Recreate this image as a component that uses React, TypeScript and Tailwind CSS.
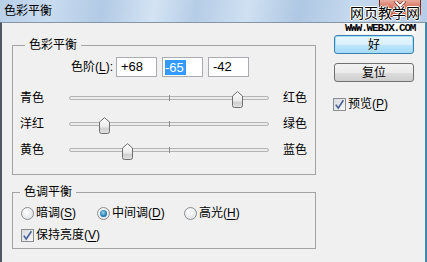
import React from 'react'

const sliders = [
  { left: '青色', right: '红色', value: 68 },
  { left: '洋红', right: '绿色', value: -65 },
  { left: '黄色', right: '蓝色', value: -42 },
]

function Thumb() {
  return (
    <svg width="11" height="17" viewBox="0 0 11 17">
      <defs>
        <linearGradient id="thumbFill" x1="0" y1="0" x2="0" y2="1">
          <stop offset="0" stopColor="#fdfdfd" />
          <stop offset="0.55" stopColor="#ececec" />
          <stop offset="0.7" stopColor="#cfcfcf" />
          <stop offset="1" stopColor="#e4e4e4" />
        </linearGradient>
      </defs>
      <path
        d="M0.5 5 L5.5 0.7 L10.5 5 V14.5 Q10.5 16.5 8.5 16.5 H2.5 Q0.5 16.5 0.5 14.5 Z"
        fill="url(#thumbFill)"
        stroke="#6f6f6f"
      />
    </svg>
  )
}

function Slider({ left, right, value }: { left: string; right: string; value: number }) {
  const center = value + 100
  return (
    <div className="flex h-[26px] items-center">
      <span className="w-[56px] pl-[7px]">{left}</span>
      <div className="relative h-[26px] w-[200px]">
        <div className="absolute left-0 right-0 top-[11px] h-[4px] rounded-full border border-[#b4b4b4] bg-[#ececec]" />
        <div className="absolute left-[100px] top-[10px] h-[6px] w-px bg-[#8c8c8c]" />
        <div className="absolute top-[6px]" style={{ left: center - 5.5 }}>
          <Thumb />
        </div>
      </div>
      <span className="ml-[14px]">{right}</span>
    </div>
  )
}

function Radio({ checked }: { checked?: boolean }) {
  return (
    <span className="flex h-[13px] w-[13px] items-center justify-center rounded-full border border-[#8b8d8f] bg-[radial-gradient(circle_at_40%_35%,#ffffff,#d9dbdd)]">
      {checked && (
        <span className="h-[7px] w-[7px] rounded-full bg-[radial-gradient(circle_at_45%_40%,#9fd4f0,#2a82b8_55%,#0f4d7c)]" />
      )}
    </span>
  )
}

function Check() {
  return (
    <span className="flex h-[13px] w-[13px] items-center justify-center border border-[#8b8d8f] bg-[linear-gradient(135deg,#d8dbe0,#f6f7f9)]">
      <svg width="11" height="11" viewBox="0 0 11 11">
        <path d="M1.8 5.6 L4.2 9 L9.4 1.2" fill="none" stroke="#4a6296" strokeWidth="1.6" />
      </svg>
    </span>
  )
}

function U({ c }: { c: string }) {
  return <span className="underline underline-offset-[2px]">{c}</span>
}

export default function App() {
  return (
    <div className="relative flex h-[262px] w-[427px] flex-col overflow-hidden bg-[#f0f0f0] text-[12px] leading-[16px] text-black font-['Liberation_Sans','Noto_Sans_CJK_SC',sans-serif]">
      {/* title bar */}
      <div className="flex h-[22px] items-center bg-[linear-gradient(100deg,#b9d0e9_0%,#c8dbef_12%,#b2cae5_24%,#d3e3f3_36%,#b6cde7_46%,#cfe0f1_58%,#aec7e3_70%,#c5d9ee_82%,#b4cce7_100%)] pl-[4px]">
        <span className="text-[12px]">色彩平衡</span>
      </div>

      {/* close button */}
      <div className="absolute right-[6px] top-0 flex h-[17px] w-[42px] justify-center rounded-b-[4px] border border-t-0 border-[#7a2c22] bg-[linear-gradient(180deg,#e9ab9d_0%,#d9735e_45%,#c0412b_55%,#d7765f_100%)] pt-[1px]">
        <svg width="12" height="10" viewBox="0 0 12 10">
          <path d="M2 1 L10 9 M10 1 L2 9" stroke="#6a2a20" strokeWidth="3.2" strokeLinecap="round" />
          <path d="M2 1 L10 9 M10 1 L2 9" stroke="#ffffff" strokeWidth="1.8" strokeLinecap="round" />
        </svg>
      </div>

      {/* watermark */}
      <div className="absolute left-[350px] top-[5px] text-[14px] leading-[16px] text-black [text-shadow:1px_0_0_#fff,-1px_0_0_#fff,0_1px_0_#fff,0_-1px_0_#fff]">
        网页教学网
      </div>
      <div className="absolute left-[345px] top-[23px] bg-white text-[11px] font-bold leading-[11px] tracking-[-1.2px] text-black font-['Liberation_Mono',monospace]">
        WWW.WEBJX.COM
      </div>

      {/* body */}
      <div className="flex flex-1 border-l-2 border-r-2 border-t border-l-[#4f5862] border-r-[#3f8ba6] border-t-[#8796a6]">
        <div className="ml-[10px] flex w-[304px] flex-col">
          <fieldset className="mt-[14px] border border-[#a3a3a3] pb-[11px] pt-[4px]">
            <legend className="ml-[12px] px-[4px] leading-[16px]">色彩平衡</legend>
            <div className="flex h-[20px] items-center">
              <span className="w-[100px] text-right">
                色阶(<U c="L" />):
              </span>
              <div className="ml-[3px] flex h-[20px] w-[41px] items-center border border-[#a9abb0] bg-white pl-[4px] text-[13px]">+68</div>
              <div className="ml-[5px] flex h-[20px] w-[41px] items-center border border-[#a9abb0] bg-white pl-[2px] text-[13px]">
                <span className="bg-[#3399ff] pr-[2px] leading-[15px] text-white">-65</span>
              </div>
              <div className="ml-[5px] flex h-[20px] w-[41px] items-center border border-[#a9abb0] bg-white pl-[4px] text-[13px]">-42</div>
            </div>
            <div className="mt-[8px]">
              {sliders.map((s) => (
                <Slider key={s.left} left={s.left} right={s.right} value={s.value} />
              ))}
            </div>
          </fieldset>

          <fieldset className="mt-[9px] border border-[#a3a3a3] pb-[5px]">
            <legend className="ml-[7px] px-[4px] leading-[16px]">色调平衡</legend>
            <div className="mt-[5px] flex h-[16px] items-center pl-[8px]">
              <div className="flex w-[76px] items-center gap-[2px]">
                <Radio />
                <span>
                  暗调(<U c="S" />)
                </span>
              </div>
              <div className="flex w-[87px] items-center gap-[2px]">
                <Radio checked />
                <span>
                  中间调(<U c="D" />)
                </span>
              </div>
              <div className="flex items-center gap-[2px]">
                <Radio />
                <span>
                  高光(<U c="H" />)
                </span>
              </div>
            </div>
            <div className="mt-[6px] flex h-[16px] items-center gap-[2px] pl-[8px]">
              <Check />
              <span>
                保持亮度(<U c="V" />)
              </span>
            </div>
          </fieldset>
        </div>

        <div className="ml-[18px] mt-[12px] flex w-[80px] flex-col">
          <button className="flex h-[19px] items-center justify-center rounded-[3px] border border-[#3c7fb1] bg-[linear-gradient(180deg,#eaf6fd_0%,#d9f0fc_50%,#bee6fd_51%,#a7d9f5_100%)] shadow-[inset_0_0_0_1px_#9fe0f8]">
            好
          </button>
          <button className="mt-[9px] flex h-[19px] items-center justify-center rounded-[3px] border border-[#707070] bg-[linear-gradient(180deg,#f2f2f2_0%,#ebebeb_50%,#dddddd_51%,#cfcfcf_100%)]">
            复位
          </button>
          <div className="mt-[14px] flex h-[16px] items-center gap-[2px] -ml-px">
            <Check />
            <span>
              预览(<U c="P" />)
            </span>
          </div>
        </div>
      </div>
    </div>
  )
}
